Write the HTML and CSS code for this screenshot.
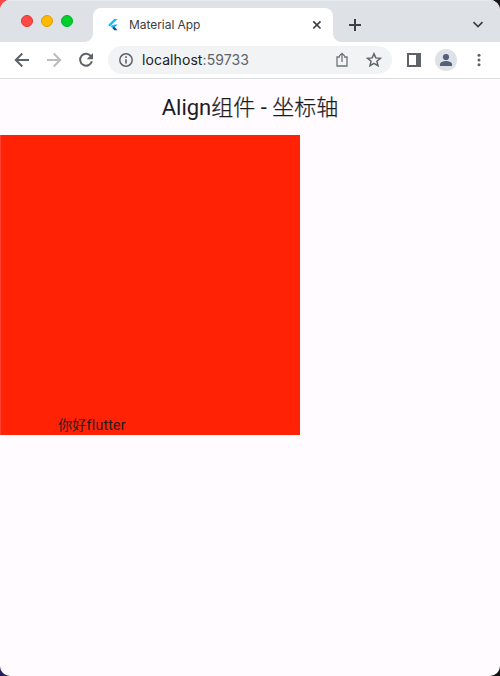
FILE: index.html
```html
<!DOCTYPE html>
<html lang="zh-CN">
<head>
<meta charset="utf-8">
<title>Material App</title>
<link rel="stylesheet" href="styles.css">
</head>
<body>
<div class="window">
  <header class="tabs">
    <div class="lights"><span class="light close"></span><span class="light min"></span><span class="light max"></span></div>
    <div class="tab">
      <svg class="logo" width="12" height="12" viewBox="0 0 12 12"><path fill="#13b9fd" d="M7.2 0H10.6L2.8 7.6 1.1 5.9zM7.2 5.4h3.4L7 9 5.3 7.2z"/><path fill="#13b9fd" d="M3.6 7.4 5.3 5.7 7 7.4 5.3 9z"/><path fill="#01469b" d="M5.3 9 7 7.4l3.6 3.8H7.4z"/></svg>
      <span class="tab-title">Material App</span>
      <svg class="tab-close" width="10" height="10" viewBox="0 0 10 10"><path d="M1.3 1.3l7.2 7.2M8.5 1.3L1.3 8.5" stroke="#3c4043" stroke-width="1.7"/></svg>
    </div>
    <svg class="plus" width="14" height="14" viewBox="0 0 14 14"><path d="M7 1v12M1 7h12" stroke="#3c4043" stroke-width="2"/></svg>
    <svg class="chevron" width="12" height="8" viewBox="0 0 12 8"><path d="M1.5 1.2L6 5.6l4.500-4.400" fill="none" stroke="#3c4043" stroke-width="1.7"/></svg>
  </header>
  <nav class="toolbar">
    <svg class="nav-icon" width="16" height="16" viewBox="0 0 16 16"><path d="M15 8H2.500M8.300 1.500L1.800 8l6.500 6.500" fill="none" stroke="#5f6368" stroke-width="2"/></svg>
    <svg class="nav-icon" width="16" height="16" viewBox="0 0 16 16"><path d="M1 8h12.500M7.700 1.500L14.200 8l-6.500 6.500" fill="none" stroke="#babcbe" stroke-width="2"/></svg>
    <svg class="nav-icon" width="16" height="16" viewBox="0 0 16 16"><path d="M13.100 4.400A6 6 0 1 0 13.900 9.300" fill="none" stroke="#5f6368" stroke-width="2"/><path d="M15 1v6.300H8.700z" fill="#5f6368"/></svg>
    <div class="address">
      <svg width="14" height="14" viewBox="0 0 14 14"><circle cx="7" cy="7" r="6.200" fill="none" stroke="#5f6368" stroke-width="1.500"/><path d="M7 6.200v4.300M7 3.300v1.600" stroke="#5f6368" stroke-width="1.600"/></svg>
      <span class="url">localhost<span class="port">:59733</span></span>
      <svg class="share" width="12" height="15" viewBox="0 0 12 15"><path d="M4 5H1v9h10V5H8M6 10V1.500M3.300 4L6 1.300 8.700 4" fill="none" stroke="#707478" stroke-width="1.300"/></svg>
      <svg class="star" width="16" height="16" viewBox="0 0 16 16"><path d="M8 1.700l1.800 4.200 4.600.4-3.500 3 1.100 4.500-4-2.400-4 2.400 1.100-4.500-3.500-3 4.600-.4z" fill="none" stroke="#5f6368" stroke-width="1.500"/></svg>
    </div>
    <svg class="panel" width="14" height="14" viewBox="0 0 14 14"><path fill="#5f6368" fill-rule="evenodd" d="M0 0h14v14H0zM2 2v10h7V2z"/></svg>
    <svg class="avatar" width="22" height="22" viewBox="0 0 22 22"><circle cx="11" cy="11" r="11" fill="#dee1e6"/><circle cx="11" cy="8" r="3.100" fill="#536079"/><path fill="#536079" d="M5 17v-1.800c0-2 3.800-3.200 6-3.200s6 1.200 6 3.200V17z"/></svg>
    <svg class="dots" width="4" height="14" viewBox="0 0 4 14"><g fill="#5f6368"><circle cx="2" cy="2.200" r="1.500"/><circle cx="2" cy="7" r="1.500"/><circle cx="2" cy="11.800" r="1.500"/></g></svg>
  </nav>
  <main class="app">
    <h1>Align<span class="cjk">组件</span> - <span class="cjk">坐标轴</span></h1>
    <div class="box"><span><span class="cjk">你好</span>flutter</span></div>
  </main>
</div>
</body>
</html>
```
FILE: styles.css
```css
* { box-sizing: border-box; }
html { height: 100%; background: linear-gradient(90deg, #fa4747 0 50%, #181719 50%); }
body {
  margin: 0;
  height: 676px;
  overflow: hidden;
  background: linear-gradient(90deg, #25205b 0 50%, #111 50%) 0 100% / 100% 50% no-repeat;
  font-family: Roboto, "Noto Sans CJK SC", sans-serif;
}
svg { display: block; flex: none; }
.window { height: 676px; border-radius: 10px; overflow: hidden; background: #fffbff; }
.tabs { display: flex; height: 42px; background: #dee1e6; border-top: 1px solid #e5e8ec; }
.lights { display: flex; gap: 8px; padding: 14px 0 0 21px; width: 93px; }
.light { width: 12px; height: 12px; border-radius: 50%; border: 1px solid; }
.close { background: #ff4a43; border-color: #e0352f; }
.min { background: #ffb900; border-color: #e0a000; }
.max { background: #00d02b; border-color: #00b323; }
.tab {
  position: relative;
  display: flex;
  align-items: center;
  width: 240px;
  height: 34px;
  margin-top: 7px;
  padding: 0 11px 0 14px;
  border-radius: 8px 8px 0 0;
  background: #fff;
}
.tab::before, .tab::after { content: ""; position: absolute; bottom: 0; width: 8px; height: 8px; }
.tab::before { left: -8px; background: radial-gradient(circle at 0 0, transparent 7.5px, #fff 8px); }
.tab::after { right: -8px; background: radial-gradient(circle at 100% 0, transparent 7.5px, #fff 8px); }
.tab-title { margin-left: 10px; padding-bottom: 2px; font-family: Inter, sans-serif; font-size: 12px; letter-spacing: -.05px; color: #3c4043; }
.tab-close { margin-left: auto; }
.plus { margin: 17px 0 0 15px; }
.chevron { margin: 20px 16px 0 auto; }
.toolbar { display: flex; align-items: center; height: 37px; padding: 0 19px 1px 14px; background: #fff; border-bottom: 1px solid #dadce0; }
.nav-icon { margin-right: 16px; }
.address { display: flex; align-items: center; width: 284px; height: 28px; margin-left: -2px; padding: 0 10px 0 11px; border-radius: 14px; background: #f1f3f4; }
.url { margin-left: 9px; font-family: Inter, sans-serif; font-size: 14px; letter-spacing: .08px; color: #202124; }
.port { color: #5f6368; }
.share { margin-left: auto; }
.star { margin-left: 18px; }
.panel { margin-left: 15px; }
.avatar { margin-left: 14px; }
.dots { margin-left: auto; }
.cjk { font-weight: 300; -webkit-text-stroke: .25px currentColor; }
h1 { margin: 0; height: 56px; line-height: 58px; text-align: center; font-size: 22px; font-weight: 400; color: #1c1b1f; }
.box { display: flex; align-items: flex-end; width: 300px; height: 300px; padding-left: 57px; background: #ff2205; border-left: 1px solid #ff4230; color: #1c1b1f; font-size: 14px; line-height: 20px; letter-spacing: .28px; }
```
